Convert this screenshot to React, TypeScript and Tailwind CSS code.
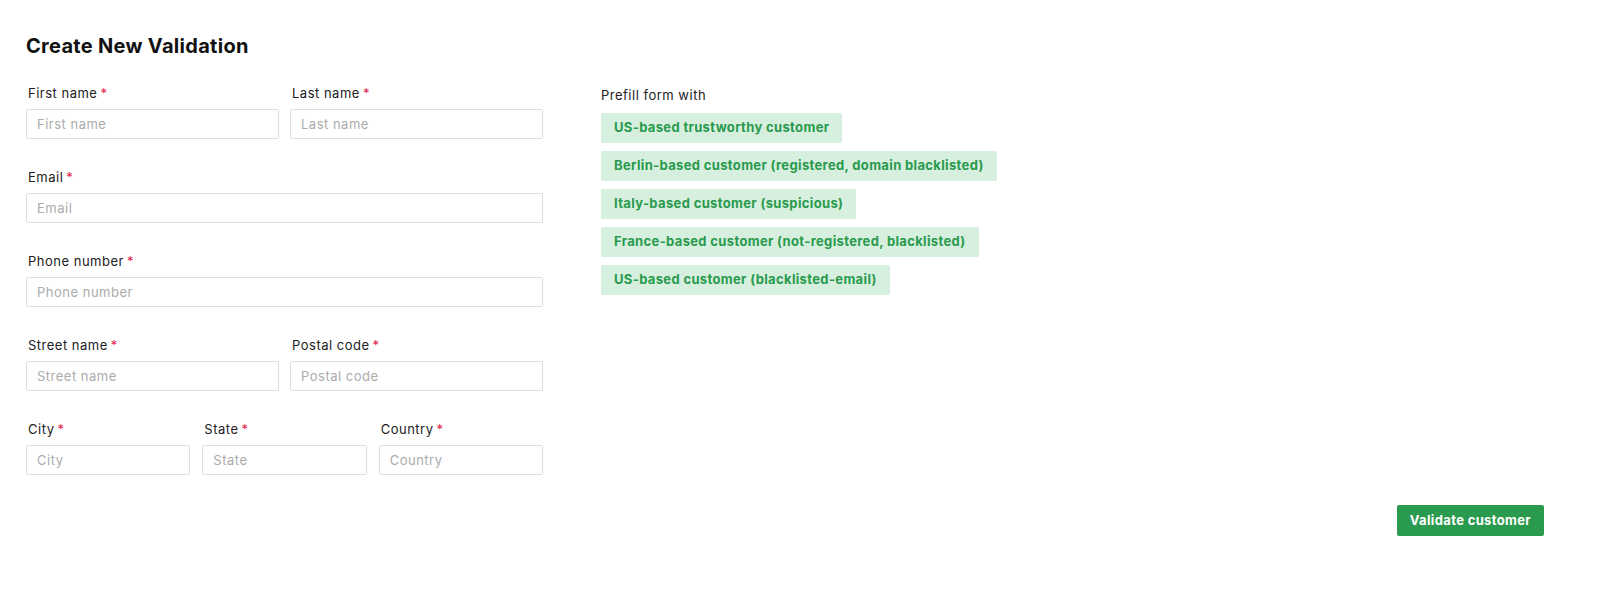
import React from 'react';

const font = { fontFamily: 'Inter, "Open Sans", sans-serif' };

function Field({ label, className = '' }: { label: string; className?: string }) {
  return (
    <div className={`flex flex-col ${className}`}>
      <label className="pl-[2px] text-[13px] leading-[16px] tracking-[0.5px] text-[#222]">
        {label}
        <span className="ml-[3px] text-[#e0234e]">*</span>
      </label>
      <input
        placeholder={label}
        className="mt-[8px] h-[30px] w-full rounded-[2px] border border-[#dedede] bg-white px-[10px] text-[13px] tracking-[0.5px] text-[#222] placeholder:text-[#ababab] outline-none"
      />
    </div>
  );
}

const presets = [
  'US-based trustworthy customer',
  'Berlin-based customer (registered, domain blacklisted)',
  'Italy-based customer (suspicious)',
  'France-based customer (not-registered, blacklisted)',
  'US-based customer (blacklisted-email)',
];

export default function App() {
  return (
    <div className="min-h-screen bg-white pl-[26px] pr-[56px] pt-[34px]" style={font}>
      <h1 className="text-[20px] font-bold leading-[24px] tracking-[0.3px] text-[#111]">Create New Validation</h1>
      <div className="mt-[27px] flex gap-[58px]">
        <div className="flex w-[517px] flex-col gap-[30px]">
          <div className="grid grid-cols-2 gap-[11px]">
            <Field label="First name" />
            <Field label="Last name" />
          </div>
          <Field label="Email" />
          <Field label="Phone number" />
          <div className="grid grid-cols-2 gap-[11px]">
            <Field label="Street name" />
            <Field label="Postal code" />
          </div>
          <div className="grid grid-cols-3 gap-[12px]">
            <Field label="City" />
            <Field label="State" />
            <Field label="Country" />
          </div>
        </div>
        <div className="flex flex-col items-start pt-[2px]">
          <div className="text-[13px] leading-[16px] tracking-[0.5px] text-[#222]">Prefill form with</div>
          <div className="mt-[10px] flex flex-col items-start gap-[8px]">
            {presets.map((p) => (
              <button
                key={p}
                className="h-[30px] rounded-[2px] bg-[#d6efde] px-[13px] text-[13px] font-bold tracking-[0.35px] text-[#2a9a4e]"
              >
                {p}
              </button>
            ))}
          </div>
        </div>
      </div>
      <div className="mt-[30px] flex justify-end">
        <button className="h-[31px] rounded-[2px] bg-[#2a9a4e] px-[13px] text-[13px] font-bold tracking-[0.35px] text-white">
          Validate customer
        </button>
      </div>
    </div>
  );
}
